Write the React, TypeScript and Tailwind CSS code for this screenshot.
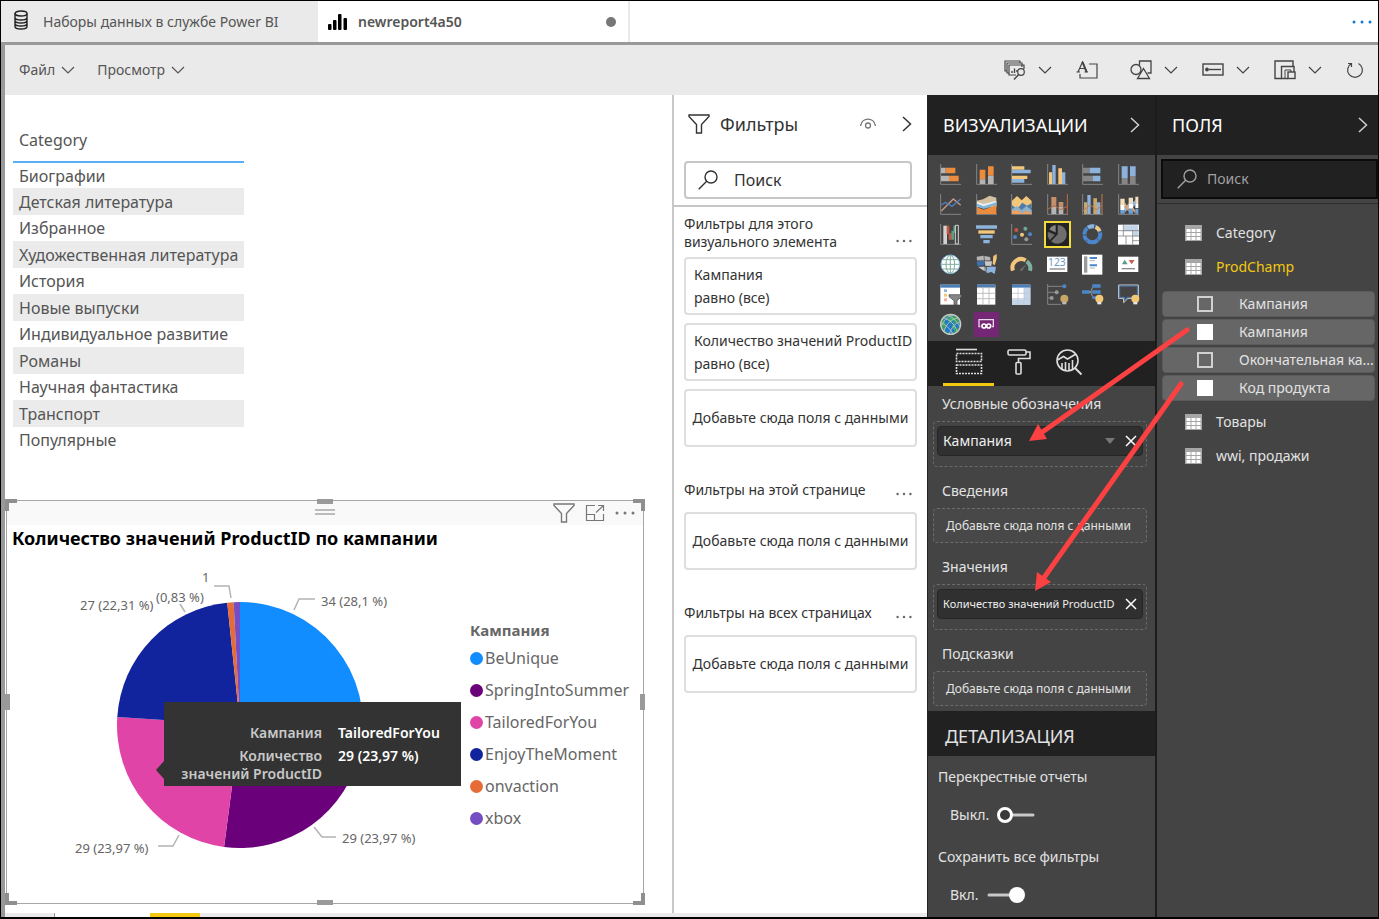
import React, { useState } from "react";

const categories = [
  "Биографии",
  "Детская литература",
  "Избранное",
  "Художественная литература",
  "История",
  "Новые выпуски",
  "Индивидуальное развитие",
  "Романы",
  "Научная фантастика",
  "Транспорт",
  "Популярные",
];

const campaigns = [
  { name: "BeUnique", value: 34, color: "#118dff" },
  { name: "SpringIntoSummer", value: 29, color: "#6b007b" },
  { name: "TailoredForYou", value: 29, color: "#e044a7" },
  { name: "EnjoyTheMoment", value: 27, color: "#12239e" },
  { name: "onvaction", value: 1, color: "#e66c37" },
  { name: "xbox", value: 1, color: "#744ec2" },
];

const Chevron = ({ className = "" }: { className?: string }) => (
  <svg viewBox="0 0 14 8" className={`w-3.5 h-2 ${className}`} fill="none" stroke="currentColor" strokeWidth="1.2">
    <path d="M1 1l6 6 6-6" />
  </svg>
);

const ChevronRight = ({ className = "" }: { className?: string }) => (
  <svg viewBox="0 0 10 16" className={`w-2.5 h-4 ${className}`} fill="none" stroke="currentColor" strokeWidth="1.5">
    <path d="M1 1l7.5 7L1 15" />
  </svg>
);

const SearchIcon = ({ className = "" }: { className?: string }) => (
  <svg viewBox="0 0 20 20" className={`w-5 h-5 ${className}`} fill="none" stroke="currentColor" strokeWidth="1.4">
    <circle cx="13" cy="7" r="6" />
    <path d="M8.7 11.3L.7 19.3" />
  </svg>
);

const FunnelIcon = ({ className = "" }: { className?: string }) => (
  <svg viewBox="0 0 22 20" className={`w-[22px] h-5 ${className}`} fill="none" stroke="currentColor" strokeWidth="1.4">
    <path d="M1 1h20v1.5L13.5 10.500v8.500h-5v-8.500L1 2.500z" />
  </svg>
);

const Dots = ({ className = "w-5" }: { className?: string }) => (
  <svg viewBox="0 0 20 4" className={`block h-1 ${className}`} fill="currentColor">
    <circle cx="2" cy="2" r="1.500" />
    <circle cx="10" cy="2" r="1.500" />
    <circle cx="18" cy="2" r="1.500" />
  </svg>
);

const TableIcon = () => (
  <svg viewBox="0 0 17 16" className="w-[17px] h-4">
    <path fill="#a6a6a6" d="M0 0h17v16H0z" />
    <g fill="#fff">
      {[4, 8, 12].map((y) =>
        [1, 6, 11].map((x) => <rect key={`${x}-${y}`} x={x + 0.5} y={y} width="4" height="3" />)
      )}
    </g>
  </svg>
);

/* ---------- top bars ---------- */

const TabStrip = () => (
  <div className="flex h-[41px] bg-white text-sm text-[#555]">
    <button className="flex items-center w-[317px] pl-3 bg-[#eaeaea]">
      <svg viewBox="0 0 16 20" className="w-4 h-5 mr-3.5 mb-1" fill="none" stroke="#222" strokeWidth="1.400">
        <ellipse cx="8" cy="3.500" rx="6" ry="2.500" />
        <path d="M2 3.500v13c0 1.400 2.700 2.500 6 2.500s6-1.100 6-2.500v-13M2 7.500C2 8.900 4.700 10 8 10s6-1.100 6-2.500M2 10.500C2 11.900 4.700 13 8 13s6-1.100 6-2.500M2 13.500C2 14.900 4.700 16 8 16s6-1.100 6-2.500" />
      </svg>
      Наборы данных в службе Power BI
    </button>
    <button className="flex items-center w-[312px] pl-2.5 pr-3 border-r-2 border-[#eaeaea] font-semibold">
      <svg viewBox="0 0 20 18" className="w-5 h-[18px] mr-2.5" fill="#000">
        <rect x="0" y="11" width="3.500" height="6" rx="1" />
        <rect x="5" y="7" width="3.500" height="10" rx="1" />
        <rect x="10" y="1" width="3.500" height="16" rx="1" />
        <rect x="15.500" y="5" width="3.500" height="12" rx="1" />
      </svg>
      newreport4a50
      <span className="ml-auto w-2.5 h-2.5 rounded-full bg-[#777]" />
    </button>
    <button aria-label="Ещё" className="ml-auto pr-1.5 text-[#0f7ad8]">
      <Dots />
    </button>
  </div>
);

const Toolbar = () => (
  <div className="flex items-center h-[50px] pl-3.5 pr-3.5 bg-[#eaeaea] text-sm text-[#555]">
    <button className="flex items-center gap-1.5">
      Файл <Chevron />
    </button>
    <button className="flex items-center gap-1.5 ml-[22px]">
      Просмотр <Chevron />
    </button>
    <div className="flex items-center gap-6 ml-auto text-[#444]">
      <button aria-label="Изучить" className="flex items-center gap-3">
        <svg viewBox="0 0 22 20" className="w-[22px] h-5" fill="none" stroke="currentColor" strokeWidth="1.200">
          <path d="M3 11H1V1h15v2M5 13H3V3h15v4M12 15H5V5h15v4" />
          <path d="M8 13v-2M10.500 13V8.500M13 12V10" strokeWidth="1.400" />
          <circle cx="17" cy="12" r="3.300" />
          <path d="M14.700 14.500L10 19.500" strokeWidth="1.500" />
        </svg>
        <Chevron />
      </button>
      <button aria-label="Текстовое поле" className="pr-2">
        <svg viewBox="0 0 22 20" className="w-[22px] h-5" fill="none" stroke="currentColor" strokeWidth="1.200">
          <path d="M13 4h8v14H4v-4" />
          <path d="M2 12L6.500 2l4.500 10M3.500 8.500h6M.5 12H4M8.500 12H12" />
          <path d="M6.500 2l4 10" strokeWidth="2" />
        </svg>
      </button>
      <button aria-label="Фигуры" className="flex items-center gap-3">
        <svg viewBox="0 0 22 20" className="w-[22px] h-5" fill="none" stroke="currentColor" strokeWidth="1.300">
          <path d="M9.500 5.500V1H21v12h-3.500" />
          <circle cx="6" cy="9.500" r="5" />
          <path d="M13.500 8.500L19.500 18.500H7.500z" />
        </svg>
        <Chevron />
      </button>
      <button aria-label="Кнопки" className="flex items-center gap-3">
        <svg viewBox="0 0 22 20" className="w-[22px] h-5" fill="none" stroke="currentColor" strokeWidth="1.400">
          <rect x="1" y="4" width="20" height="11" />
          <path d="M7 9.500h12" />
          <circle cx="5" cy="9.500" r="1.200" fill="currentColor" />
        </svg>
        <Chevron />
      </button>
      <button aria-label="Визуальные взаимодействия" className="flex items-center gap-3">
        <svg viewBox="0 0 22 20" className="w-[22px] h-5" fill="none" stroke="currentColor" strokeWidth="1.400">
          <path d="M7.500 18.500H1V1h18v5" />
          <path d="M14 18.500H7.500V6.500H20V12" />
          <path d="M11 18V10h6v2" strokeWidth="1" />
          <rect x="14" y="12" width="7" height="6.500" />
        </svg>
        <Chevron />
      </button>
      <button aria-label="Обновить">
        <svg viewBox="0 0 18 20" className="w-[18px] h-5" fill="none" stroke="currentColor" strokeWidth="1.200">
          <path d="M12.500 3.500a7.400 7.400 0 1 1-7 0M5.500 7V3.500H2" />
        </svg>
      </button>
    </div>
  </div>
);

/* ---------- report canvas ---------- */

const CategoryTable = () => (
  <table className="w-[231px] ml-2 text-base text-[#555] text-left">
    <thead>
      <tr className="h-[67px] border-b-2 border-[#58aef8]">
        <th className="pl-1.5 pt-6 font-normal">Category</th>
      </tr>
    </thead>
    <tbody>
      {categories.map((name) => (
        <tr key={name} className="h-[26px] even:h-[27px] even:bg-[#ebebeb]">
          <td className="pl-1.5 leading-5 whitespace-nowrap">{name}</td>
        </tr>
      ))}
    </tbody>
  </table>
);

const PieChart = () => {
  const cx = 232;
  const cy = 175;
  const r = 123;
  const total = campaigns.reduce((sum, c) => sum + c.value, 0);
  const point = (v: number) => {
    const a = (v / total) * Math.PI * 2;
    return `${cx + r * Math.sin(a)} ${cy - r * Math.cos(a)}`;
  };
  let acc = 0;

  return (
    <svg viewBox="0 0 462 340" className="w-[462px] h-[340px]">
      {campaigns.map((c) => {
        const start = acc;
        acc += c.value;
        return (
          <path key={c.name} fill={c.color} d={`M${cx} ${cy}L${point(start)}A${r} ${r} 0 0 1 ${point(acc)}z`} />
        );
      })}
      <g fill="none" stroke="#b3b3b3" strokeWidth="1.500">
        <path d="M286 60l5-11h16" />
        <path d="M206 36h15l2 12" />
        <path d="M172 54l5 8" />
        <path d="M306 277l8 10h14" />
        <path d="M150 296h15l6-11" />
      </g>
      <g className="text-[13px]" fill="#666">
        <text x="313" y="56">34 (28,1 %)</text>
        <text x="194" y="32">1</text>
        <text x="148" y="52">(0,83 %)</text>
        <text x="72" y="60">27 (22,31 %)</text>
        <text x="334" y="293">29 (23,97 %)</text>
        <text x="67" y="303">29 (23,97 %)</text>
      </g>
    </svg>
  );
};

const Tooltip = () => (
  <div className="absolute left-[156px] top-[152px] w-[297px] h-[84px] pt-[22px] bg-[#333] text-sm leading-[18px] font-semibold">
    <svg viewBox="0 0 8 18" className="absolute -left-2 top-[59px] w-2 h-[18px]" fill="#333">
      <path d="M8 0v18L0 9z" />
    </svg>
    <dl className="grid grid-cols-[158px_1fr] gap-x-4 gap-y-[5px]">
      <dt className="text-right text-[#c8c8c8]">Кампания</dt>
      <dd className="text-white">TailoredForYou</dd>
      <dt className="text-right text-[#c8c8c8]">
        Количество
        <br />
        значений ProductID
      </dt>
      <dd className="text-white">29 (23,97 %)</dd>
    </dl>
  </div>
);

const Handles = () => (
  <div className="pointer-events-none">
    <i className="absolute -left-0.5 -top-0.5 w-3 h-3 border-t-4 border-l-4 border-[#8f8f8f]" />
    <i className="absolute -right-0.5 -top-0.5 w-3 h-3 border-t-4 border-r-4 border-[#8f8f8f]" />
    <i className="absolute -left-0.5 -bottom-0.5 w-3 h-3 border-b-4 border-l-4 border-[#8f8f8f]" />
    <i className="absolute -right-0.5 -bottom-0.5 w-3 h-3 border-b-4 border-r-4 border-[#8f8f8f]" />
    <i className="absolute left-1/2 -translate-x-1/2 -top-0.5 w-4 h-[5px] bg-[#9a9a9a]" />
    <i className="absolute left-1/2 -translate-x-1/2 -bottom-0.5 w-4 h-[5px] bg-[#9a9a9a]" />
    <i className="absolute -left-0.5 top-1/2 -translate-y-1/2 w-[5px] h-4 bg-[#9a9a9a]" />
    <i className="absolute -right-0.5 top-1/2 -translate-y-1/2 w-[5px] h-4 bg-[#9a9a9a]" />
  </div>
);

const PieVisual = () => (
  <section className="relative w-[638px] h-[404px] ml-px border border-[#a6a6a6] bg-white">
    <div className="relative flex items-center justify-end gap-2.5 h-6 pr-2 bg-[#f9f9f9] text-[#777]">
      <svg viewBox="0 0 20 6" className="absolute left-1/2 top-2 -translate-x-1/2 w-5 h-1.5" stroke="#a6a6a6">
        <path d="M0 1h20M0 5h20" strokeWidth="1.300" />
      </svg>
      <button aria-label="Фильтры визуального элемента">
        <FunnelIcon className="block" />
      </button>
      <button aria-label="Режим фокусировки">
        <svg viewBox="0 0 20 18" className="block w-5 h-[18px]" fill="none" stroke="currentColor" strokeWidth="1.200">
          <path d="M10 1.500H1.500v15h17V10M1.500 10.500h8v6M11 8.500l7.500-7M13 1.500h5.500V7" />
        </svg>
      </button>
      <button aria-label="Дополнительные параметры">
        <Dots />
      </button>
    </div>
    <h2 className="pl-[5px] h-[25px] leading-[26px] text-lg font-bold text-black">
      Количество значений ProductID по кампании
    </h2>
    <div className="flex pl-px">
      <div className="relative">
        <PieChart />
        <Tooltip />
      </div>
      <div className="pt-[68px] text-[#666]">
        <h3 className="leading-6 text-[15px] font-bold">Кампания</h3>
        <ul className="text-base">
          {campaigns.map((c) => (
            <li key={c.name} className="flex items-center gap-0.5 h-8 leading-8">
              <span className="w-[13px] h-[13px] rounded-full" style={{ background: c.color }} />
              {c.name}
            </li>
          ))}
        </ul>
      </div>
    </div>
    <Handles />
  </section>
);

/* ---------- filters pane ---------- */

const FilterCard = ({ title, condition }: { title: string; condition: string }) => (
  <div className="flex flex-col justify-center h-[58px] pl-2 border-2 border-[#dedede] rounded-sm leading-[23px] whitespace-nowrap">
    <span>{title}</span>
    <span>{condition}</span>
  </div>
);

const FilterDrop = () => (
  <div className="flex items-center justify-center h-[58px] border-2 border-[#dedede] rounded-sm whitespace-nowrap">
    Добавьте сюда поля с данными
  </div>
);

const FilterGroup = ({ title, children }: { title: string; children: React.ReactNode }) => (
  <section>
    <div className="flex items-end justify-between h-[65px] pb-3 pr-[5px]">
      <h3>{title}</h3>
      <button aria-label="Ещё" className="pb-1 text-[#666]">
        <Dots className="w-4" />
      </button>
    </div>
    {children}
  </section>
);

const FiltersPane = () => (
  <aside className="w-[255px] shrink-0 border-l-2 border-[#c8c8c8] bg-white text-sm text-[#333]">
    <div className="flex items-center h-[58px] pl-3.5 pr-[15px]">
      <FunnelIcon />
      <h2 className="ml-2.5 text-lg">Фильтры</h2>
      <button aria-label="Показать" className="ml-auto mr-[26px]">
        <svg viewBox="0 0 16 12" className="block w-4 h-3" fill="none" stroke="#777" strokeWidth="1.300">
          <path d="M.5 8C2 -1.300 14 -1.300 15.500 8" />
          <circle cx="8" cy="7.500" r="2.500" />
        </svg>
      </button>
      <button aria-label="Свернуть фильтры">
        <ChevronRight className="block" />
      </button>
    </div>
    <div className="pt-2 pb-1.5 pl-2.5 pr-[15px] border-b-2 border-[#c8c6c4]">
      <label className="flex items-center h-[38px] pl-3 border-2 border-[#c8c6c4] rounded-sm">
        <SearchIcon className="mr-4 shrink-0" />
        <input placeholder="Поиск" className="w-full min-w-0 text-base outline-none placeholder:text-[#333]" />
      </label>
    </div>
    <div className="px-2.5">
      <section>
        <div className="flex items-end justify-between h-[50px] pb-1.5 pr-[5px]">
          <h3 className="leading-[18px]">
            Фильтры для этого
            <br />
            визуального элемента
          </h3>
          <button aria-label="Ещё" className="pb-2 text-[#666]">
            <Dots className="w-4" />
          </button>
        </div>
        <div className="flex flex-col gap-2">
          <FilterCard title="Кампания" condition="равно (все)" />
          <FilterCard title="Количество значений ProductID" condition="равно (все)" />
          <FilterDrop />
        </div>
      </section>
      <FilterGroup title="Фильтры на этой странице">
        <FilterDrop />
      </FilterGroup>
      <FilterGroup title="Фильтры на всех страницах">
        <FilterDrop />
      </FilterGroup>
    </div>
  </aside>
);

/* ---------- visualizations pane ---------- */

const axis = <path d="M2 0v61h61" fill="none" stroke="#858585" strokeWidth="3" />;
const bulb = (
  <g>
    <circle cx="52" cy="44" r="12" fill="#f4c773" />
    <path d="M46 54h12v7H46z" fill="#e6e6e6" />
  </g>
);

const visuals: { name: string; art: React.ReactNode }[] = [
  {
    name: "Линейчатая диаграмма с накоплением",
    art: (
      <g>
        {axis}
        <path fill="#b5b5b5" d="M3 11h14v17H3zM3 35h24v17H3z" />
        <path fill="#ec8b3c" d="M17 11h29v17H17zM27 35h29v17H27z" />
      </g>
    ),
  },
  {
    name: "Гистограмма с накоплением",
    art: (
      <g>
        {axis}
        <path fill="#ec8b3c" d="M11 17h17v29H11zM36 7h17v28H36z" />
        <path fill="#b5b5b5" d="M11 46h17v14H11zM36 35h17v25H36z" />
      </g>
    ),
  },
  {
    name: "Линейчатая диаграмма с группировкой",
    art: (
      <g>
        {axis}
        <path fill="#f2c77c" d="M3 7h37v10H3zM3 35h46v10H3z" />
        <path fill="#8db2dc" d="M3 17h56v11H3zM3 45h37v11H3z" />
      </g>
    ),
  },
  {
    name: "Гистограмма с группировкой",
    art: (
      <g>
        {axis}
        <path fill="#f2c77c" d="M6 25h10v35H6zM34 13h11v47H34z" />
        <path fill="#8db2dc" d="M16 3h10v57H16zM45 25h10v35H45z" />
      </g>
    ),
  },
  {
    name: "Нормированная линейчатая диаграмма",
    art: (
      <g>
        {axis}
        <path fill="#858585" d="M3 11h20v17H3zM3 35h30v17H3z" />
        <path fill="#8db2dc" d="M23 11h32v17H23zM33 35h22v17H33z" />
      </g>
    ),
  },
  {
    name: "Нормированная гистограмма",
    art: (
      <g>
        {axis}
        <path fill="#8db2dc" d="M11 7h18v35H11zM36 7h17v29H36z" />
        <path fill="#858585" d="M11 42h18v18H11zM36 36h17v24H36z" />
      </g>
    ),
  },
  {
    name: "График",
    art: (
      <g fill="none" strokeWidth="4">
        {axis}
        <path stroke="#c9988a" d="M4 51L40 15l22 19" />
        <path stroke="#4c7fba" d="M4 33l12-8 20 12 26-22" />
      </g>
    ),
  },
  {
    name: "Диаграмма с областями",
    art: (
      <g>
        {axis}
        <path fill="#d2c0a1" d="M3 20l18-4 20-11 20 6v20L3 34z" />
        <path fill="#e9eff2" d="M3 23l20 7 38-10v20L3 40z" />
        <path fill="#7db5d8" d="M3 29l20 8 38-12v9L23 45 3 37z" />
        <path fill="#ec8b3c" d="M3 40l20 7 38-14v27H3z" />
      </g>
    ),
  },
  {
    name: "Диаграмма с областями с накоплением",
    art: (
      <g>
        {axis}
        <path fill="#f2c77c" d="M3 20L18 6l14 13L46 6l16 15v20H3z" />
        <path fill="#4f7aab" d="M3 33l15 13 16-20 14 9 14-7v31H3z" />
        <path fill="#8fb0c9" d="M3 46l15-10 14 12 14-12 16 12v12H3z" />
        <path fill="#f0a05c" d="M3 60V52l16-4 14 10 14-8 15 6v4z" />
      </g>
    ),
  },
  {
    name: "Линейный график и гистограмма с накоплением",
    art: (
      <g>
        {axis}
        <path fill="#c48f6b" d="M13 9h15v29H13zM35 24h14v14H35z" />
        <path fill="#b5b5b5" d="M13 38h15v22H13zM35 38h14v22H35z" />
        <path d="M61 0v60M3 45l20-10 18 12 20-10" fill="none" stroke="#c26b3f" strokeWidth="3" />
      </g>
    ),
  },
  {
    name: "Линейный график и гистограмма с группировкой",
    art: (
      <g>
        {axis}
        <path fill="#c9a76c" d="M6 25h10v35H6zM34 13h11v47H34z" />
        <path fill="#8db2dc" d="M16 3h10v57H16zM45 25h10v35H45z" />
        <path d="M60 0v60M3 50l22-17 18 14 17-13" fill="none" stroke="#c97b44" strokeWidth="3" />
      </g>
    ),
  },
  {
    name: "Ленточная диаграмма",
    art: (
      <g>
        {axis}
        <path fill="#8db2dc" d="M20 42l12-14v14L20 56zM45 24l7-6v14l-7 8z" />
        <path fill="#f0a05c" d="M20 24l12 18v12L20 36zM45 40l7 10v8l-7-8z" />
        <path fill="#f3dfbd" d="M7 14h13v22H7zM32 11h13v17H32zM52 8h9v20h-9z" />
        <path fill="#fff" d="M7 34h13v14H7zM32 28h13v16H32zM52 28h9v14h-9z" />
        <path fill="#6ea0d4" d="M7 48h13v11H7zM32 44h13v15H32zM52 44h9v15h-9z" />
      </g>
    ),
  },
  {
    name: "Каскадная диаграмма",
    art: (
      <g>
        {axis}
        <path fill="#d2d2d2" d="M10 5h11v55H10z" />
        <path fill="#c7553f" d="M20 5h8v25h-8zM26 28h9v19h-9z" />
        <path fill="#5b9c83" d="M34 20h8v27h-8zM40 5h8v22h-8z" />
        <path fill="none" stroke="#d2d2d2" strokeWidth="3" d="M46 4h9v56h-9z" />
      </g>
    ),
  },
  {
    name: "Воронка",
    art: (
      <g>
        <path fill="#8db2dc" d="M0 4h63v10H0zM13 33h37v10H13zM22 48h19v10H22z" />
        <path fill="#f2c77c" d="M7 19h49v10H7z" />
      </g>
    ),
  },
  {
    name: "Точечная диаграмма",
    art: (
      <g>
        {axis}
        <circle cx="16" cy="18" r="6" fill="#c7553f" />
        <circle cx="43" cy="14" r="6" fill="#6fa791" />
        <circle cx="12" cy="39" r="6" fill="#4a86c9" />
        <circle cx="33" cy="32" r="6" fill="#f2c77c" />
        <circle cx="57" cy="31" r="6" fill="#4a86c9" />
        <circle cx="46" cy="46" r="6" fill="#999" />
      </g>
    ),
  },
  {
    name: "Круговая диаграмма",
    art: (
      <g fill="#6e6e6e" stroke="#222" strokeWidth="2">
        <path d="M31 31V2a29 29 0 1 1-20 50z" />
        <path d="M27 27L6 17A26 26 0 0 1 27 2z" fill="#858585" />
        <path d="M25 32L8 50A27 27 0 0 1 3 22z" />
      </g>
    ),
  },
  {
    name: "Кольцевой график",
    art: (
      <g fill="none" strokeWidth="12">
        <circle cx="31" cy="31" r="24" stroke="#4a86c9" />
        <path d="M18 11a24 24 0 0 1 20-3" stroke="#8db2dc" />
        <path d="M41 9a24 24 0 0 1 12 12" stroke="#f2c77c" />
        <path d="M13 7l8 10M39 1l-3 14M51 26l12-5M0 33h14M15 48l-6 8M46 45l8 10" stroke="#444" strokeWidth="2.500" />
      </g>
    ),
  },
  {
    name: "Диаграмма дерева",
    art: (
      <g>
        <path fill="#fff" d="M0 2h63v60H0z" />
        <path fill="#c4d5ea" d="M18 4h43v18H18zM46 22h16v15H46z" />
        <path d="M16 2v34M0 20h16M0 36h63M44 20v16M16 20h47M24 36v26M44 50h19M44 36v26" stroke="#6b6b6b" strokeWidth="2" fill="none" />
      </g>
    ),
  },
  {
    name: "Карта",
    art: (
      <g>
        <circle cx="31" cy="31" r="28" fill="#fff" stroke="#7db5d8" strokeWidth="3" />
        <g fill="none" stroke="#7fae9d" strokeWidth="3">
          <ellipse cx="31" cy="31" rx="13" ry="27" />
          <path d="M31 3v56M4 31h54M9 17h44M9 45h44" />
        </g>
      </g>
    ),
  },
  {
    name: "Картограмма",
    art: (
      <g>
        <path fill="#b5b5b5" d="M2 8l20-3 20 4 2 12-20 2L3 20z" />
        <path fill="#3f72ad" d="M2 22l20-2 4 14-22 2z" />
        <path fill="#c9c9c9" d="M24 22h24l-2 14H28zM6 38l22-2 4 18-12-6z" />
        <path fill="#8db2dc" d="M32 38l18-2 10 4-4 20-10-6-14 4z" />
        <path fill="#f2c77c" d="M52 6l10-6v14l-6 20-6-4z" />
        <path d="M2 20h44M24 5l4 50M4 37h50" stroke="#444" strokeWidth="2" fill="none" />
      </g>
    ),
  },
  {
    name: "Датчик",
    art: (
      <g fill="none" strokeWidth="12">
        <path d="M6 50A26 26 0 0 1 44 19" stroke="#f2c77c" />
        <path d="M47 22a26 26 0 0 1 10 28" stroke="#7fae9d" />
        <path d="M25 48l22-18-14 22z" fill="#6a6a6a" stroke="none" />
      </g>
    ),
  },
  {
    name: "Карточка",
    art: (
      <g>
        <path fill="#fff" d="M0 8h61v46H0z" />
        <text x="3" y="36" fontSize="31" fill="#6c9ac4">123</text>
        <path d="M8 45h46" stroke="#8a8a8a" strokeWidth="4" />
      </g>
    ),
  },
  {
    name: "Многострочная карточка",
    art: (
      <g>
        <path fill="#fff" d="M0 2h61v60H0z" />
        <path fill="#9a9a9a" d="M6 7h10v49H6z" />
        <path d="M23 12h22M23 34h22" stroke="#4a86c9" strokeWidth="6" />
        <path d="M23 20h16M23 42h16" stroke="#b5b5b5" strokeWidth="3" />
      </g>
    ),
  },
  {
    name: "Ключевой показатель эффективности",
    art: (
      <g>
        <path fill="#fff" d="M0 8h61v46H0z" />
        <path fill="#5b9c83" d="M12 31l8-14 9 14z" />
        <path fill="#d05f4b" d="M32 18h18l-9 13z" />
        <path d="M11 44h40" stroke="#8a8a8a" strokeWidth="4" />
      </g>
    ),
  },
  {
    name: "Срез",
    art: (
      <g>
        <path fill="#fff" d="M1 2h59v60H1z" />
        <path fill="#4a7fba" d="M1 2h59v9H1z" />
        <path fill="#8db2dc" d="M12 16h9v8h-9z" />
        <path fill="#f2c77c" d="M12 29h9v9h-9z" />
        <path fill="#f0b1a0" d="M12 43h9v9h-9z" />
        <path fill="#858585" stroke="#444" strokeWidth="2" d="M27 32h38v6L51 50v13h-9V50L27 38z" />
      </g>
    ),
  },
  {
    name: "Таблица",
    art: (
      <g>
        <path fill="#fff" d="M3 2h55v60H3z" />
        <path fill="#4a7fba" d="M3 2h55v9H3z" />
        <path d="M21 11v51M39 11v51M3 28h55M3 44h55M3 11h55" stroke="#b5b5b5" strokeWidth="2.500" />
      </g>
    ),
  },
  {
    name: "Матрица",
    art: (
      <g>
        <path fill="#fff" d="M3 2h55v60H3z" />
        <path fill="#c4d5ea" d="M39 11h19v51H3V46h36z" />
        <path fill="#4a7fba" d="M3 2h55v9H3z" />
        <path d="M21 11v51M39 11v51M3 28h55M3 44h55" stroke="#c0c8d2" strokeWidth="2.500" />
      </g>
    ),
  },
  {
    name: "Ключевые факторы влияния",
    art: (
      <g>
        <path d="M2 0v61h40M3 7h48M3 25h28M3 42h12" fill="none" stroke="#858585" strokeWidth="3" />
        <circle cx="52" cy="7" r="6" fill="#4a86c9" />
        <circle cx="29" cy="25" r="6" fill="#999" />
        <circle cx="14" cy="42" r="6" fill="#999" />
        <g opacity=".75">{bulb}</g>
      </g>
    ),
  },
  {
    name: "Дерево декомпозиции",
    art: (
      <g>
        <path d="M20 24c14 0 6-18 18-18M20 24h20M20 24c14 0 6 18 18 18" fill="none" stroke="#999" strokeWidth="3" />
        <path fill="#4a86c9" d="M0 19h23v10H0zM31 1h25v10H31zM31 19h25v10H31zM31 37h14v8H31z" />
        {bulb}
      </g>
    ),
  },
  {
    name: "Вопросы и ответы",
    art: (
      <g>
        <path d="M2 3h59v40H30L17 56V43H2z" fill="none" stroke="#d2d2d2" strokeWidth="3" />
        <path d="M5 6h53v34H28L20 50V40H5z" fill="none" stroke="#4a7fba" strokeWidth="3" />
        {bulb}
      </g>
    ),
  },
  {
    name: "Карты ArcGIS",
    art: (
      <g>
        <circle cx="32" cy="31" r="31" fill="#3c9f63" />
        <path fill="#1f78c8" d="M12 14l18-8 12 12-6 20 8 14-14 8-16-10 4-18zM42 30l14-8 2 16-12 10z" />
        <path fill="#3fb46a" d="M22 16l12-8 8 8-10 10zM38 34l10 4-6 12z" />
        <g fill="none" stroke="#c8c8c8" strokeWidth="2.500">
          <circle cx="32" cy="31" r="30" strokeWidth="4" />
          <path d="M10 12c18 4 36 20 42 42M24 3c16 8 30 22 36 36M3 26c14 6 28 18 36 34M54 12C36 14 18 30 12 52M40 3C24 6 8 22 4 38M60 24C48 26 34 40 28 60" />
        </g>
      </g>
    ),
  },
  {
    name: "Power Apps",
    art: (
      <g>
        <path fill="#742774" d="M-7-6h76v75H-7z" />
        <path d="M13 38H9V17h43v21h-4" fill="none" stroke="#e8d8e8" strokeWidth="4" />
        <circle cx="24" cy="36" r="6" fill="none" stroke="#fff" strokeWidth="5" />
        <circle cx="38" cy="36" r="6" fill="none" stroke="#fff" strokeWidth="5" />
      </g>
    ),
  },
];

const PaneHeader = ({ title, className }: { title: string; className: string }) => (
  <div className={`flex items-center justify-between h-[60px] pl-[15px] bg-[#212121] ${className}`}>
    <h2 className="text-lg text-white">{title}</h2>
    <button aria-label="Свернуть" className="text-[#d0d0d0]">
      <ChevronRight className="block" />
    </button>
  </div>
);

const PaneTabs = () => (
  <div className="flex h-[45px] pl-[15px] bg-[#212121] text-[#ddd]">
    <button aria-label="Поля" className="flex justify-center items-center w-[51px] border-b-[3px] border-[#f2c811]">
      <svg viewBox="0 0 28 28" className="w-7 h-7" fill="none" stroke="currentColor" strokeWidth="1.600">
        <path d="M1 1.500h21" />
        <path d="M1.500 5.500h25v8h-25zM1.500 17h25v8.500h-25z" strokeDasharray="2 1" />
      </svg>
    </button>
    <button aria-label="Формат" className="flex justify-center items-center w-[49px] pb-[3px]">
      <svg viewBox="0 0 24 28" className="w-6 h-7" fill="none" stroke="currentColor" strokeWidth="1.600">
        <rect x="1" y="2" width="18" height="5" rx="1.500" />
        <path d="M19 4h4v6.500H11.500V14" />
        <rect x="9" y="14.500" width="5" height="11.500" rx="1" />
      </svg>
    </button>
    <button aria-label="Аналитика" className="flex justify-center items-center w-[51px] pb-[3px]">
      <svg viewBox="0 0 28 28" className="w-7 h-7" fill="none" stroke="currentColor" strokeWidth="1.600">
        <circle cx="12.500" cy="12.500" r="10.500" />
        <path d="M2.500 12l6-3.500 4 2.500L21 6M7 15v6M10.500 14v8.500M14 15v7.500M17.500 12v9" />
        <path d="M20 20l6.500 6.500" strokeWidth="2" />
      </svg>
    </button>
  </div>
);

const Well = ({ title, field, menu, small }: { title: string; field?: string; menu?: boolean; small?: boolean }) => (
  <section className="pl-[5px] pr-2">
    <h3 className="h-[35px] pl-[9px] leading-[35px] text-sm">{title}</h3>
    {field ? (
      <div className="h-[46px] p-[3px] pt-1 border border-dashed border-[#6b6b6b] rounded">
        <div
          className={`flex items-center h-[30px] pl-[5px] pr-[5px] bg-[#303030] border border-[#262626] rounded text-[#eee] whitespace-nowrap ${small ? "text-[11px]" : "text-sm"}`}
        >
          {field}
          {menu && (
            <svg viewBox="0 0 10 6" className="ml-auto w-2.5 h-1.5" fill="#777">
              <path d="M0 0h10L5 6z" />
            </svg>
          )}
          <button aria-label="Удалить поле" className={menu ? "ml-2.5" : "ml-auto"}>
            <svg viewBox="0 0 12 12" className="block w-3 h-3" stroke="#fff" strokeWidth="1.500">
              <path d="M1 1l10 10M11 1L1 11" />
            </svg>
          </button>
        </div>
      </div>
    ) : (
      <div className="flex items-center h-[35px] pl-3 border border-dashed border-[#6b6b6b] rounded bg-[#484848] text-xs whitespace-nowrap">
        Добавьте сюда поля с данными
      </div>
    )}
  </section>
);

const Toggle = ({ title, initial }: { title: string; initial: boolean }) => {
  const [on, setOn] = useState(initial);
  return (
    <div className="h-20 pt-[9px] text-sm">
      <h3 className="pl-2.5 leading-6">{title}</h3>
      <label className="relative flex items-center gap-2 h-6 mt-3.5 ml-[22px]">
        {on ? "Вкл." : "Выкл."}
        <input
          type="checkbox"
          role="switch"
          aria-label={title}
          checked={on}
          onChange={(e) => setOn(e.target.checked)}
          className="sr-only"
        />
        <svg viewBox="0 0 38 16" className="w-[38px] h-4">
          <path d={on ? "M2 8h24" : "M14 8h22"} stroke="#c8c8c8" strokeWidth="3" strokeLinecap="round" />
          {on ? (
            <circle cx="30" cy="8" r="8" fill="#fff" />
          ) : (
            <circle cx="8" cy="8" r="6.500" fill="#3a3a3a" stroke="#fff" strokeWidth="3" />
          )}
        </svg>
      </label>
    </div>
  );
};

const VisualsPane = () => (
  <aside className="w-[228px] shrink-0 border-l border-[#222] bg-[#444] text-[#e2e2e2]">
    <PaneHeader title="ВИЗУАЛИЗАЦИИ" className="pr-[15px]" />
    <div className="grid grid-cols-6 pt-1 pb-0.5 pl-[5px] pr-[9px]">
      {visuals.map((v) => (
        <button key={v.name} aria-label={v.name} className="flex items-center justify-center h-[30px]">
          {v.name === "Круговая диаграмма" ? (
            <span className="p-px border-2 border-[#f2dc3d] bg-[#222]">
              <svg viewBox="0 0 63 63" className="block w-[21px] h-[21px]">
                {v.art}
              </svg>
            </span>
          ) : (
            <svg viewBox="0 0 63 63" className="w-[21px] h-[21px] overflow-visible">
              {v.art}
            </svg>
          )}
        </button>
      ))}
    </div>
    <PaneTabs />
    <div className="flex flex-col gap-1.5 pb-[5px]">
      <Well title="Условные обозначения" field="Кампания" menu />
      <Well title="Сведения" />
      <Well title="Значения" field="Количество значений ProductID" small />
      <Well title="Подсказки" />
    </div>
    <h2 className="h-[45px] pl-[17px] leading-[51px] bg-[#212121] text-lg">ДЕТАЛИЗАЦИЯ</h2>
    <Toggle title="Перекрестные отчеты" initial={false} />
    <Toggle title="Сохранить все фильтры" initial={true} />
  </aside>
);

/* ---------- fields pane ---------- */

const TableRow = ({ name, active }: { name: string; active?: boolean }) => (
  <button className={`flex items-center gap-[14px] h-[34px] pl-7 text-sm ${active ? "text-[#f2c811]" : ""}`}>
    <TableIcon />
    {name}
  </button>
);

const FieldRow = ({ name, checked }: { name: string; checked?: boolean }) => (
  <label className="flex items-center h-[26px] pl-[34px] rounded-sm bg-[#666] border border-[#5a5a5a] text-sm whitespace-nowrap">
    <input
      type="checkbox"
      defaultChecked={checked}
      className="appearance-none w-4 h-4 mr-[26px] shrink-0 border-2 border-[#d0d0d0] checked:border-white checked:bg-white"
    />
    {name}
  </label>
);

const FieldsPane = () => (
  <aside className="w-[223px] shrink-0 border-l-2 border-[#1c1c1c] bg-[#444] text-[#e2e2e2]">
    <PaneHeader title="ПОЛЯ" className="pr-2.5" />
    <div className="pt-1 pb-1 pl-1 border-b border-[#2e2e2e]">
      <label className="flex items-center h-10 pl-3.5 bg-[#212121] border-2 border-[#0c0c0c] text-[#a0a0a0]">
        <SearchIcon className="mr-2.5 shrink-0" />
        <input placeholder="Поиск" className="w-full min-w-0 text-sm outline-none placeholder:text-[#a0a0a0]" />
      </label>
    </div>
    <div className="flex flex-col pt-3">
      <TableRow name="Category" />
      <TableRow name="ProdChamp" active />
      <div className="flex flex-col gap-0.5 mt-[7px] mb-1 ml-[5px] mr-[3px]">
        <FieldRow name="Кампания" />
        <FieldRow name="Кампания" checked />
        <FieldRow name="Окончательная ка..." />
        <FieldRow name="Код продукта" checked />
      </div>
      <TableRow name="Товары" />
      <TableRow name="wwi, продажи" />
    </div>
  </aside>
);

const Arrows = () => (
  <svg viewBox="0 0 451 600" className="absolute right-0 top-0 w-[451px] h-[600px] pointer-events-none">
    <g stroke="#fb4141" strokeWidth="5" strokeLinecap="round">
      <path d="M260 235L114 338" />
      <path d="M254 289L116 484" />
    </g>
    <g fill="#fb4141">
      <path d="M102 346l9-17 9 15z" />
      <path d="M108 496l2-19 14 10z" />
    </g>
  </svg>
);

const App = () => (
  <div className="flex flex-col min-h-screen border border-b-2 border-black bg-white font-['Noto_Sans','Open_Sans',sans-serif]">
    <TabStrip />
    <div className="flex flex-col flex-1 border-t-[3px] border-l-4 border-[#999]">
      <Toolbar />
      <div className="relative flex flex-1">
        <div className="flex flex-col flex-1 min-w-0">
          <div className="flex flex-1">
            <main className="flex-1 min-w-0">
              <CategoryTable />
              <div className="mt-[47px]">
                <PieVisual />
              </div>
            </main>
            <FiltersPane />
          </div>
          <div className="flex h-1 bg-[#eaeaea]">
            <span className="w-[50px] border-r border-[#999]" />
            <span className="w-[95px] bg-white" />
            <span className="w-[50px] bg-[#f2c811]" />
          </div>
        </div>
        <VisualsPane />
        <FieldsPane />
        <Arrows />
      </div>
    </div>
  </div>
);

export default App;
